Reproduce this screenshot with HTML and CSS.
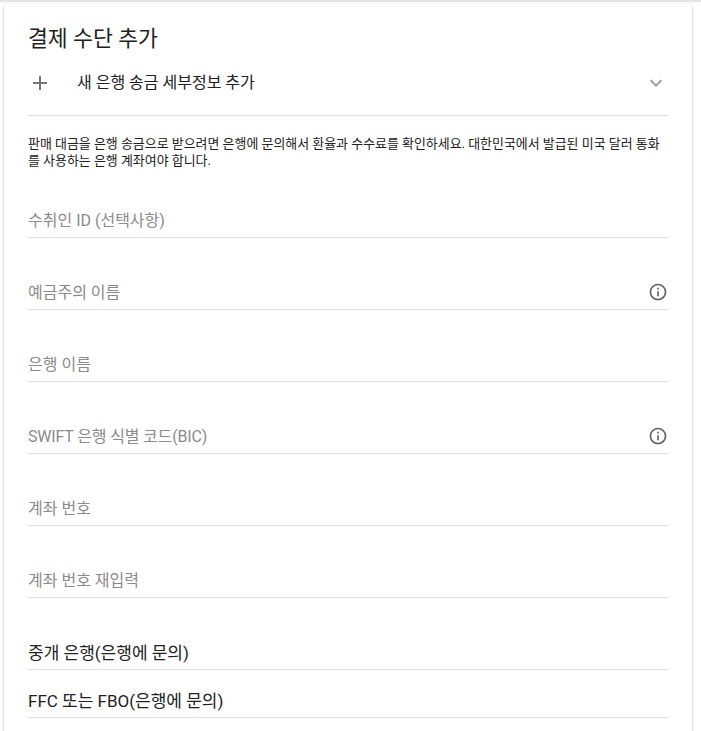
FILE: index.html
```html
<!DOCTYPE html>
<html lang="ko">
<head>
<meta charset="utf-8">
<title>결제 수단 추가</title>
<link rel="stylesheet" href="styles.css">
</head>
<body>
<main class="card">
  <h1 class="title">결제 수단 추가</h1>
  <div class="add-row">
    <svg class="plus" width="24" height="24" viewBox="0 0 24 24"><path d="M19 13h-6v6h-2v-6H5v-2h6V5h2v6h6v2z"/></svg>
    <span class="add-label">새 은행 송금 세부정보 추가</span>
    <svg class="chevron" width="24" height="24" viewBox="0 0 24 24"><path d="M7.41 8.59 12 13.17l4.59-4.58L18 10l-6 6-6-6z"/></svg>
  </div>
  <p class="note">판매 대금을 은행 송금으로 받으려면 은행에 문의해서 환율과 수수료를 확인하세요. 대한민국에서 발급된 미국 달러 통화를 사용하는 은행 계좌여야 합니다.</p>
  <div class="field"><span>수취인 ID (선택사항)</span></div>
  <div class="field"><span>예금주의 이름</span>
    <svg class="info" width="20" height="20" viewBox="0 0 24 24"><path d="M11 7h2v2h-2zm0 4h2v6h-2zm1-9C6.48 2 2 6.48 2 12s4.480 10 10 10 10-4.480 10-10S17.520 2 12 2zm0 18c-4.410 0-8-3.590-8-8s3.590-8 8-8 8 3.590 8 8-3.590 8-8 8z"/></svg></div>
  <div class="field"><span>은행 이름</span></div>
  <div class="field"><span class="tight">SWIFT 은행 식별 코드(BIC)</span>
    <svg class="info" width="20" height="20" viewBox="0 0 24 24"><path d="M11 7h2v2h-2zm0 4h2v6h-2zm1-9C6.48 2 2 6.48 2 12s4.480 10 10 10 10-4.480 10-10S17.520 2 12 2zm0 18c-4.410 0-8-3.590-8-8s3.590-8 8-8 8 3.590 8 8-3.590 8-8 8z"/></svg></div>
  <div class="field"><span>계좌 번호</span></div>
  <div class="field"><span>계좌 번호 재입력</span></div>
  <div class="field field-dark"><span>중개 은행(은행에 문의)</span></div>
  <div class="field field-dark field-short"><span>FFC 또는 FBO(은행에 문의)</span></div>
</main>
</body>
</html>
```

FILE: styles.css
```css
html, body {
  margin: 0;
  height: 731px;
  overflow: hidden;
  background: #fff;
}
body {
  padding: 2px 0 0 4px;
  box-sizing: border-box;
  border-top: 2px solid #e4e4e4;
  font-family: Roboto, "Noto Sans CJK KR", sans-serif;
  color: #212121;
}
.card {
  width: 688px;
  height: 760px;
  box-sizing: border-box;
  padding: 19px 24px 0;
  background: #fff;
  border-radius: 2px;
  box-shadow: 0 1px 3px rgba(0, 0, 0, .28);
}
.title {
  margin: 0;
  padding-top: 2px;
  font-size: 21.6px;
  font-weight: 400;
  line-height: 28px;
}
.add-row {
  display: flex;
  align-items: center;
  height: 48px;
  margin-top: 6px;
  padding-bottom: 8px;
  border-bottom: 1px solid #e0e0e0;
  font-size: 16px;
}
.plus {
  fill: #757575;
  flex: none;
}
.add-label {
  flex: 1;
  margin-left: 25px;
  padding-bottom: 5px;
  color: #212121;
}
.chevron {
  fill: #9e9e9e;
  flex: none;
}
.note {
  margin: 19px 0 0;
  font-size: 12.95px;
  line-height: 17px;
  color: #212121;
}
.field {
  display: flex;
  align-items: center;
  justify-content: space-between;
  height: 32px;
  margin-top: 39px;
  font-size: 16px;
  color: #8a8a8a;
  border-bottom: 1px solid #e0e0e0;
}
.field span {
  padding-bottom: 5px;
}
.note + .field {
  margin-top: 36px;
}
.field-dark {
  font-size: 17px;
  color: #212121;
}
.field-dark span {
  padding-bottom: 3px;
}
.field-short {
  margin-top: 15px;
}
.tight {
  letter-spacing: -.17px;
}
.info {
  fill: #616161;
  flex: none;
  margin-bottom: 3px;
}
```
